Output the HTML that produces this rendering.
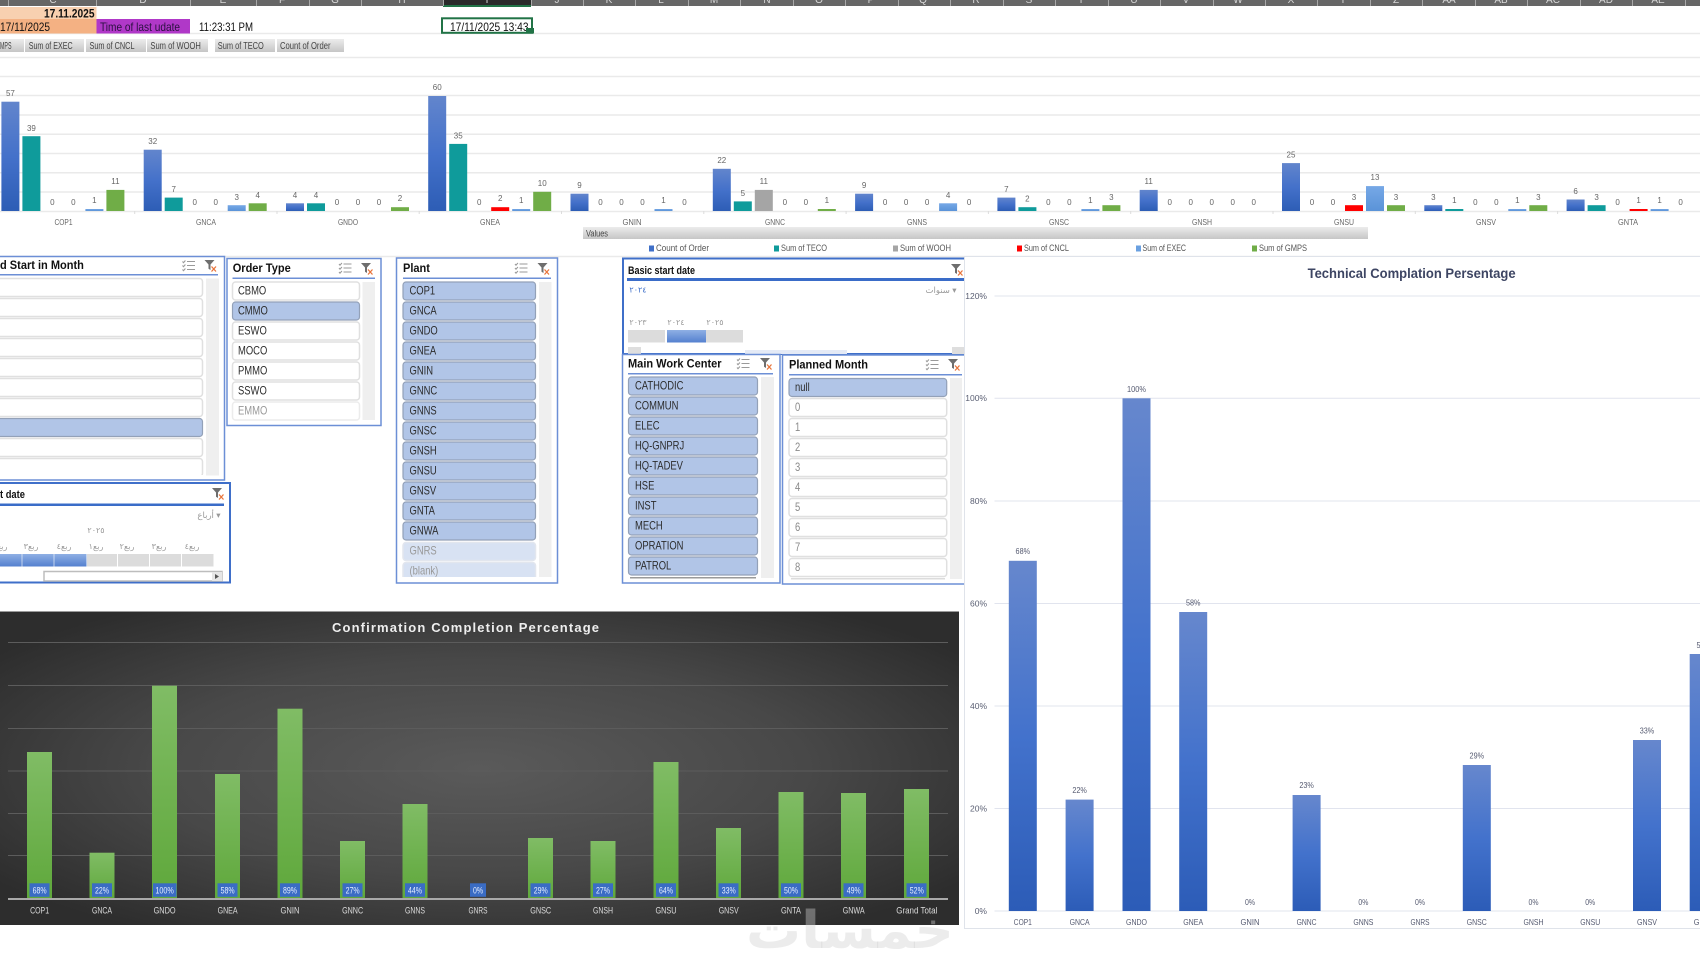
<!DOCTYPE html>
<html lang="en"><head><meta charset="utf-8"><title>Dashboard</title>
<style>
html,body{margin:0;padding:0;background:#fff;width:1700px;height:970px;overflow:hidden}
svg{display:block;filter:blur(.3px)}
text{font-family:"Liberation Sans","DejaVu Sans",sans-serif}
.rl{stroke:#eaeaea;stroke-width:1.5}
.hd{font-size:10px;fill:#d8d8d8;text-anchor:middle}
.hs{fill:#a8a8a8;width:1px;height:6px;y:0}
.cell{font-size:12px;fill:#111}
.btn{font-size:10px;fill:#444}
.v{font-size:8px;fill:#666;text-anchor:middle}
.cat{font-size:8.5px;fill:#666;text-anchor:middle}
.lg{font-size:9px;fill:#555}
.c1{fill:url(#gB);width:18px}.c2{fill:#0f9b9b;width:18px}.c3{fill:#a5a5a5;width:18px}.c4{fill:#f00;width:18px}.c5{fill:url(#gL);width:18px}.c6{fill:#70ad47;width:18px}
.sl{fill:#fff;stroke:#6c8fd6;stroke-width:1.5}
.sd{fill:#fff;stroke:#3f6fc9;stroke-width:2}
.ul{fill:#6c8fd6}
.ud{fill:#3a6cc8}
.sb{fill:#efefef}
.ttl{font-size:12px;font-weight:bold;fill:#111}
.it{font-size:11.5px;fill:#2c2c2c}
.it2{font-size:11.5px;fill:#999}
.w{fill:#fff;stroke:#e0e0e0;stroke-width:1.5}
.b{fill:#b1c5e7;stroke:#93a1b8;stroke-width:1.2}
.l{fill:#d8e2f3;stroke:#e2e6ee;stroke-width:1.5}
.f{fill:#fff;stroke:#ececec;stroke-width:1.5}
.s1{width:207.5px;height:18px;rx:3px}
.s2{width:127px;height:18px;rx:3px}
.s3{width:132.5px;height:18px;rx:3px}
.s4{width:129px;height:18px;rx:3px}
.s5{width:157.7px;height:18px;rx:3px}
.ar{font-size:8px;fill:#999;text-anchor:middle}
.g{fill:#dcdcdc}
.tg{stroke:#e1e4ee;stroke-width:1}
.ty{font-size:8.5px;fill:#5a5f73;text-anchor:end}
.tl{font-size:8.5px;fill:#555a70;text-anchor:middle}
.tb{fill:url(#gT);width:28px}
.dg{stroke:#5c5c5c;stroke-width:1}
.db{fill:url(#gG);width:25px}
.dbx{fill:#3a6cc4;height:13.5px}
.dt{font-size:9px;fill:#e6eeff;text-anchor:middle}
.dc{font-size:9px;fill:#ddd;text-anchor:middle}
</style></head><body>
<svg width="1700" height="970" viewBox="0 0 1700 970" xmlns="http://www.w3.org/2000/svg">
<defs>
<linearGradient id="gB" x1="0" y1="0" x2="0" y2="1"><stop offset="0" stop-color="#6285cc"/><stop offset=".5" stop-color="#4471ca"/><stop offset="1" stop-color="#2d5db5"/></linearGradient>
<linearGradient id="gL" x1="0" y1="0" x2="0" y2="1"><stop offset="0" stop-color="#76a8e6"/><stop offset="1" stop-color="#5a93d8"/></linearGradient>
<linearGradient id="gT" x1="0" y1="0" x2="0" y2="1"><stop offset="0" stop-color="#6687cd"/><stop offset=".5" stop-color="#4372cc"/><stop offset="1" stop-color="#2c5cb7"/></linearGradient>
<linearGradient id="gG" x1="0" y1="0" x2="0" y2="1"><stop offset="0" stop-color="#80bc65"/><stop offset="1" stop-color="#5fa83b"/></linearGradient>
<linearGradient id="gBtn" x1="0" y1="0" x2="0" y2="1"><stop offset="0" stop-color="#ececec"/><stop offset="1" stop-color="#c6c6c6"/></linearGradient>
<linearGradient id="gSel" x1="0" y1="0" x2="0" y2="1"><stop offset="0" stop-color="#8fb0e4"/><stop offset="1" stop-color="#5480cf"/></linearGradient>
<radialGradient id="gD" cx="50%" cy="50%" r="62%"><stop offset="0" stop-color="#5a5a5a"/><stop offset=".55" stop-color="#484848"/><stop offset="1" stop-color="#2d2d2d"/></radialGradient>
<g id="ic1" fill="none" stroke="#9a9a9a" stroke-width="1.1"><path d="M5 1.5H13M5 5.5H13M5 9.5H13"/><path d="M0.5 1.5L1.5 2.7L3.4 0.5M0.5 5.5L1.5 6.7L3.4 4.5M0.5 9.5L1.5 10.7L3.4 8.5"/></g>
<g id="ic2"><path d="M0 0H10L6 4.5V10L4 8.8V4.5Z" fill="#6e6e6e"/><path d="M7 6.5L11.5 11.5M11.5 6.5L7 11.5" stroke="#e8743b" stroke-width="1.3" fill="none"/></g>
</defs>

<rect width="1700" height="970" fill="#fff"/>
<!-- row lines -->
<g class="rl"><line x1="0" x2="1700" y1="33.5" y2="33.5"/><line x1="0" x2="1700" y1="57.5" y2="57.5"/><line x1="0" x2="1700" y1="76.5" y2="76.5"/><line x1="0" x2="1700" y1="95.5" y2="95.5"/><line x1="0" x2="1700" y1="115" y2="115"/><line x1="0" x2="1700" y1="134.3" y2="134.3"/><line x1="0" x2="1700" y1="153.5" y2="153.5"/><line x1="0" x2="1700" y1="172.7" y2="172.7"/><line x1="0" x2="1700" y1="192" y2="192"/><line x1="0" x2="1700" y1="211.5" y2="211.5"/><line x1="0" x2="1700" y1="256.5" y2="256.5"/></g>

<!-- column headers -->
<rect width="1700" height="6" fill="#666"/>
<rect x="443" width="88" height="5" fill="#2a2a2a"/><rect x="443" y="5" width="88" height="2" fill="#217346"/>
<g>
<rect class="hs" x="8"/><rect class="hs" x="96"/><rect class="hs" x="190"/><rect class="hs" x="256"/><rect class="hs" x="309"/><rect class="hs" x="361"/><rect class="hs" x="443"/><rect class="hs" x="531"/><rect class="hs" x="583"/><rect class="hs" x="635"/><rect class="hs" x="688"/><rect class="hs" x="740"/><rect class="hs" x="793"/><rect class="hs" x="845"/><rect class="hs" x="898"/><rect class="hs" x="950"/><rect class="hs" x="1003"/><rect class="hs" x="1055"/><rect class="hs" x="1108"/><rect class="hs" x="1160"/><rect class="hs" x="1213"/><rect class="hs" x="1265"/><rect class="hs" x="1317"/><rect class="hs" x="1370"/><rect class="hs" x="1422"/><rect class="hs" x="1475"/><rect class="hs" x="1527"/><rect class="hs" x="1580"/><rect class="hs" x="1632"/><rect class="hs" x="1685"/>
</g>
<g class="hd"><text x="53" y="3">C</text><text x="143" y="3">D</text><text x="223" y="3">E</text><text x="282" y="3">F</text><text x="335" y="3">G</text><text x="402" y="3">H</text><text x="487" y="3">I</text><text x="557" y="3">J</text><text x="609" y="3">K</text><text x="661" y="3">L</text><text x="714" y="3">M</text><text x="767" y="3">N</text><text x="819" y="3">O</text><text x="871" y="3">P</text><text x="923" y="3">Q</text><text x="976" y="3">R</text><text x="1029" y="3">S</text><text x="1081" y="3">T</text><text x="1134" y="3">U</text><text x="1186" y="3">V</text><text x="1238" y="3">W</text><text x="1291" y="3">X</text><text x="1343" y="3">Y</text><text x="1396" y="3">Z</text><text x="1449" y="3">AA</text><text x="1501" y="3">AB</text><text x="1553" y="3">AC</text><text x="1606" y="3">AD</text><text x="1658" y="3">AE</text></g>

<!-- top cells -->
<rect x="0" y="7" width="96.5" height="12" fill="#f8d0b0"/>
<rect x="0" y="19" width="96.5" height="14.5" fill="#f4b183"/>
<rect x="96.5" y="19" width="93.5" height="14.5" fill="#b038c8"/>
<text class="cell" x="44" y="17.5" font-weight="bold" textLength="50.5" lengthAdjust="spacingAndGlyphs">17.11.2025</text>
<text class="cell" x="0" y="31" textLength="50" lengthAdjust="spacingAndGlyphs">17/11/2025</text>
<text class="cell" x="100" y="31" textLength="80" lengthAdjust="spacingAndGlyphs" style="fill:#2a1040">Time of last udate</text>
<text class="cell" x="199" y="31" textLength="54" lengthAdjust="spacingAndGlyphs">11:23:31 PM</text>
<rect x="442" y="18.3" width="90" height="14.5" fill="#fff" stroke="#217346" stroke-width="2"/>
<text class="cell" x="450" y="31" textLength="78.5" lengthAdjust="spacingAndGlyphs">17/11/2025 13:43</text>
<rect x="526" y="28" width="8" height="5.5" fill="#217346"/>

<!-- pivot buttons -->
<g fill="url(#gBtn)"><rect x="-2" y="39" width="26" height="13"/><rect x="25" y="39" width="59" height="13"/><rect x="86" y="39" width="60" height="13"/><rect x="147" y="39" width="61" height="13"/><rect x="215" y="39" width="60" height="13"/><rect x="277" y="39" width="67" height="13"/></g>
<text class="btn" x="0" y="49" textLength="11.5" lengthAdjust="spacingAndGlyphs">MPS</text>
<text class="btn" x="28.7" y="49" textLength="44" lengthAdjust="spacingAndGlyphs">Sum of EXEC</text>
<text class="btn" x="89.5" y="49" textLength="45" lengthAdjust="spacingAndGlyphs">Sum of CNCL</text>
<text class="btn" x="150.4" y="49" textLength="50.5" lengthAdjust="spacingAndGlyphs">Sum of WOOH</text>
<text class="btn" x="217.8" y="49" textLength="46" lengthAdjust="spacingAndGlyphs">Sum of TECO</text>
<text class="btn" x="280" y="49" textLength="50.5" lengthAdjust="spacingAndGlyphs">Count of Order</text>

<!-- bars chart -->
<g transform="translate(-7.6 0)">
<rect class="c1" x="9" y="101.7" height="109.3"/><rect class="c2" x="30" y="136.2" height="74.8"/><rect class="c5" x="93" y="209" height="2"/><rect class="c6" x="114" y="189.9" height="21.1"/>
<g class="v"><text x="18" y="96">57</text><text x="39" y="131">39</text><text x="60" y="205">0</text><text x="81" y="205">0</text><text x="102" y="203">1</text><text x="123" y="184">11</text></g></g>
<g transform="translate(134.7 0)">
<rect class="c1" x="9" y="149.7" height="61.3"/><rect class="c2" x="30" y="197.6" height="13.4"/><rect class="c5" x="93" y="205.2" height="5.8"/><rect class="c6" x="114" y="203.3" height="7.7"/>
<g class="v"><text x="18" y="144">32</text><text x="39" y="192">7</text><text x="60" y="205">0</text><text x="81" y="205">0</text><text x="102" y="200">3</text><text x="123" y="198">4</text></g></g>
<g transform="translate(277 0)">
<rect class="c1" x="9" y="203.3" height="7.7"/><rect class="c2" x="30" y="203.3" height="7.7"/><rect class="c6" x="114" y="207.2" height="3.8"/>
<g class="v"><text x="18" y="198">4</text><text x="39" y="198">4</text><text x="60" y="205">0</text><text x="81" y="205">0</text><text x="102" y="205">0</text><text x="123" y="201">2</text></g></g>
<g transform="translate(419.2 0)">
<rect class="c1" x="9" y="96" height="115"/><rect class="c2" x="30" y="143.9" height="67.1"/><rect class="c4" x="72" y="207.2" height="3.8"/><rect class="c5" x="93" y="209" height="2"/><rect class="c6" x="114" y="191.8" height="19.2"/>
<g class="v"><text x="18" y="90">60</text><text x="39" y="138.5">35</text><text x="60" y="205">0</text><text x="81" y="201">2</text><text x="102" y="203">1</text><text x="123" y="186">10</text></g></g>
<g transform="translate(561.5 0)">
<rect class="c1" x="9" y="193.7" height="17.3"/><rect class="c5" x="93" y="209" height="2"/>
<g class="v"><text x="18" y="188">9</text><text x="39" y="205">0</text><text x="60" y="205">0</text><text x="81" y="205">0</text><text x="102" y="203">1</text><text x="123" y="205">0</text></g></g>
<g transform="translate(703.8 0)">
<rect class="c1" x="9" y="168.8" height="42.2"/><rect class="c2" x="30" y="201.4" height="9.6"/><rect class="c3" x="51" y="189.9" height="21.1"/><rect class="c6" x="114" y="209" height="2"/>
<g class="v"><text x="18" y="163">22</text><text x="39" y="196">5</text><text x="60" y="184">11</text><text x="81" y="205">0</text><text x="102" y="205">0</text><text x="123" y="203">1</text></g></g>
<g transform="translate(846.1 0)">
<rect class="c1" x="9" y="193.7" height="17.3"/><rect class="c5" x="93" y="203.3" height="7.7"/>
<g class="v"><text x="18" y="188">9</text><text x="39" y="205">0</text><text x="60" y="205">0</text><text x="81" y="205">0</text><text x="102" y="198">4</text><text x="123" y="205">0</text></g></g>
<g transform="translate(988.4 0)">
<rect class="c1" x="9" y="197.6" height="13.4"/><rect class="c2" x="30" y="207.2" height="3.8"/><rect class="c5" x="93" y="209" height="2"/><rect class="c6" x="114" y="205.2" height="5.8"/>
<g class="v"><text x="18" y="192">7</text><text x="39" y="201.5">2</text><text x="60" y="205">0</text><text x="81" y="205">0</text><text x="102" y="203">1</text><text x="123" y="200">3</text></g></g>
<g transform="translate(1130.7 0)">
<rect class="c1" x="9" y="189.9" height="21.1"/>
<g class="v"><text x="18" y="184">11</text><text x="39" y="205">0</text><text x="60" y="205">0</text><text x="81" y="205">0</text><text x="102" y="205">0</text><text x="123" y="205">0</text></g></g>
<g transform="translate(1273 0)">
<rect class="c1" x="9" y="163.1" height="47.9"/><rect class="c4" x="72" y="205.2" height="5.8"/><rect class="c5" x="93" y="186.1" height="24.9"/><rect class="c6" x="114" y="205.2" height="5.8"/>
<g class="v"><text x="18" y="157.5">25</text><text x="39" y="205">0</text><text x="60" y="205">0</text><text x="81" y="200">3</text><text x="102" y="180">13</text><text x="123" y="200">3</text></g></g>
<g transform="translate(1415.3 0)">
<rect class="c1" x="9" y="205.2" height="5.8"/><rect class="c2" x="30" y="209" height="2"/><rect class="c5" x="93" y="209" height="2"/><rect class="c6" x="114" y="205.2" height="5.8"/>
<g class="v"><text x="18" y="200">3</text><text x="39" y="203">1</text><text x="60" y="205">0</text><text x="81" y="205">0</text><text x="102" y="203">1</text><text x="123" y="200">3</text></g></g>
<g transform="translate(1557.6 0)">
<rect class="c1" x="9" y="199.5" height="11.5"/><rect class="c2" x="30" y="205.2" height="5.8"/><rect class="c4" x="72" y="209" height="2"/><rect class="c5" x="93" y="209" height="2"/>
<g class="v"><text x="18" y="194">6</text><text x="39" y="200">3</text><text x="60" y="205">0</text><text x="81" y="203">1</text><text x="102" y="203">1</text><text x="123" y="205">0</text></g></g>
<g stroke="#dcdcdc"><line x1="134.7" x2="134.7" y1="211" y2="214"/><line x1="277" x2="277" y1="211" y2="214"/><line x1="419.2" x2="419.2" y1="211" y2="214"/><line x1="561.5" x2="561.5" y1="211" y2="214"/><line x1="703.8" x2="703.8" y1="211" y2="214"/><line x1="846.1" x2="846.1" y1="211" y2="214"/><line x1="988.4" x2="988.4" y1="211" y2="214"/><line x1="1130.7" x2="1130.7" y1="211" y2="214"/><line x1="1273" x2="1273" y1="211" y2="214"/><line x1="1415.3" x2="1415.3" y1="211" y2="214"/><line x1="1557.6" x2="1557.6" y1="211" y2="214"/></g>
<g class="cat"><text x="63.5" y="225" textLength="18" lengthAdjust="spacingAndGlyphs">COP1</text><text x="206" y="225" textLength="20" lengthAdjust="spacingAndGlyphs">GNCA</text><text x="348" y="225" textLength="20" lengthAdjust="spacingAndGlyphs">GNDO</text><text x="490" y="225" textLength="20" lengthAdjust="spacingAndGlyphs">GNEA</text><text x="632" y="225" textLength="19" lengthAdjust="spacingAndGlyphs">GNIN</text><text x="775" y="225" textLength="20" lengthAdjust="spacingAndGlyphs">GNNC</text><text x="917" y="225" textLength="20" lengthAdjust="spacingAndGlyphs">GNNS</text><text x="1059" y="225" textLength="20" lengthAdjust="spacingAndGlyphs">GNSC</text><text x="1202" y="225" textLength="20" lengthAdjust="spacingAndGlyphs">GNSH</text><text x="1344" y="225" textLength="20" lengthAdjust="spacingAndGlyphs">GNSU</text><text x="1486" y="225" textLength="20" lengthAdjust="spacingAndGlyphs">GNSV</text><text x="1628" y="225" textLength="20" lengthAdjust="spacingAndGlyphs">GNTA</text></g>

<rect x="583" y="227" width="785" height="12" fill="url(#gBtn)"/>
<text class="btn" x="586" y="236.5" textLength="22" lengthAdjust="spacingAndGlyphs" style="font-size:9px">Values</text>

<!-- legend -->
<rect x="649" y="245.5" width="5" height="6" fill="#3f6fc8"/><text class="lg" x="656" y="251" textLength="53" lengthAdjust="spacingAndGlyphs">Count of Order</text>
<rect x="774" y="245.5" width="5" height="6" fill="#0f9b9b"/><text class="lg" x="781" y="251" textLength="46" lengthAdjust="spacingAndGlyphs">Sum of TECO</text>
<rect x="893" y="245.5" width="5" height="6" fill="#a5a5a5"/><text class="lg" x="900" y="251" textLength="51" lengthAdjust="spacingAndGlyphs">Sum of WOOH</text>
<rect x="1017" y="245.5" width="5" height="6" fill="#f00"/><text class="lg" x="1024" y="251" textLength="45" lengthAdjust="spacingAndGlyphs">Sum of CNCL</text>
<rect x="1136" y="245.5" width="5" height="6" fill="#6aa0e0"/><text class="lg" x="1142.5" y="251" textLength="43.5" lengthAdjust="spacingAndGlyphs">Sum of EXEC</text>
<rect x="1252" y="245.5" width="5" height="6" fill="#70ad47"/><text class="lg" x="1259" y="251" textLength="48" lengthAdjust="spacingAndGlyphs">Sum of GMPS</text>

<!-- Slicer 1 -->
<rect class="sl" x="-3" y="256.5" width="227.5" height="223.5"/>
<text class="ttl" y="269" transform="translate(0 0) scale(.92 1)">d Start in Month</text>
<rect class="ul" x="0" y="274" width="218" height="1.5"/>
<use href="#ic1" x="182" y="260"/><use href="#ic2" x="204.5" y="260"/>
<rect class="sb" x="206" y="278.5" width="13" height="197"/>
<g><rect class="s1 w" x="-5" y="278.5"/><rect class="s1 w" x="-5" y="298.5"/><rect class="s1 w" x="-5" y="318.5"/><rect class="s1 w" x="-5" y="338.5"/><rect class="s1 w" x="-5" y="358.5"/><rect class="s1 w" x="-5" y="378.5"/><rect class="s1 w" x="-5" y="398.5"/><rect class="s1 b" x="-5" y="418.5"/><rect class="s1 w" x="-5" y="438.5"/><rect class="s1 w" x="-5" y="458.5"/></g>
<rect x="-2" y="475" width="207" height="4" fill="#fff"/>

<!-- Order Type -->
<rect class="sl" x="227" y="258.5" width="154" height="167"/>
<text class="ttl" transform="translate(232.7 272) scale(.92 1)">Order Type</text>
<rect class="ul" x="232.5" y="277.5" width="142.5" height="1.5"/>
<use href="#ic1" x="338.5" y="262.5"/><use href="#ic2" x="361" y="263"/>
<rect class="sb" x="362.5" y="282" width="12.5" height="138"/>
<rect class="s2 w" x="232.5" y="282"/><rect class="s2 b" x="232.5" y="302"/><rect class="s2 w" x="232.5" y="322"/><rect class="s2 w" x="232.5" y="342"/><rect class="s2 w" x="232.5" y="362"/><rect class="s2 w" x="232.5" y="382"/><rect class="s2 f" x="232.5" y="402"/>
<g transform="translate(238 0) scale(.82 1)"><g class="it"><text y="294.5">CBMO</text><text y="314.5">CMMO</text><text y="334.5">ESWO</text><text y="354.5">MOCO</text><text y="374.5">PMMO</text><text y="394.5">SSWO</text></g><text class="it2" y="414.5">EMMO</text></g>

<!-- Plant -->
<rect class="sl" x="396.5" y="258" width="161" height="325"/>
<text class="ttl" transform="translate(403 272) scale(.92 1)">Plant</text>
<rect class="ul" x="403" y="277.5" width="148" height="1.5"/>
<use href="#ic1" x="514.5" y="262.5"/><use href="#ic2" x="537.5" y="263"/>
<rect class="sb" x="539" y="282" width="12.5" height="295"/>
<rect class="s3 b" x="403" y="282"/><rect class="s3 b" x="403" y="302"/><rect class="s3 b" x="403" y="322"/><rect class="s3 b" x="403" y="342"/><rect class="s3 b" x="403" y="362"/><rect class="s3 b" x="403" y="382"/><rect class="s3 b" x="403" y="402"/><rect class="s3 b" x="403" y="422"/><rect class="s3 b" x="403" y="442"/><rect class="s3 b" x="403" y="462"/><rect class="s3 b" x="403" y="482"/><rect class="s3 b" x="403" y="502"/><rect class="s3 b" x="403" y="522"/><rect class="s3 l" x="403" y="542.5"/><rect class="s3 l" x="403" y="562.5"/>
<rect x="401" y="577" width="137" height="5" fill="#fff"/>
<g transform="translate(409.5 0) scale(.82 1)"><g class="it"><text y="294.5">COP1</text><text y="314.5">GNCA</text><text y="334.5">GNDO</text><text y="354.5">GNEA</text><text y="374.5">GNIN</text><text y="394.5">GNNC</text><text y="414.5">GNNS</text><text y="434.5">GNSC</text><text y="454.5">GNSH</text><text y="474.5">GNSU</text><text y="494.5">GNSV</text><text y="514.5">GNTA</text><text y="534.5">GNWA</text></g><text class="it2" y="554.5">GNRS</text><text class="it2" y="574.5">(blank)</text></g>

<!-- Date slicer bottom left -->
<rect class="sd" x="-3" y="483" width="233" height="99.5"/>
<text class="ttl" transform="translate(0 498) scale(.85 1)" style="font-size:11px">t date</text>
<rect class="ud" x="0" y="503.5" width="224" height="2.5"/>
<use href="#ic2" x="212" y="488"/>
<text class="ar" x="209" y="518" style="font-size:8.5px">أرباع ▾</text>
<text class="ar" x="96" y="533">٢٠٢٥</text>
<g class="ar"><text x="0" y="549">ربع٢</text><text x="31" y="549">ربع٣</text><text x="64" y="549">ربع٤</text><text x="96" y="549">ربع١</text><text x="127" y="549">ربع٢</text><text x="159" y="549">ربع٣</text><text x="192" y="549">ربع٤</text></g>
<rect x="0" y="554" width="86.5" height="12.5" fill="url(#gSel)"/><rect x="21.5" y="554" width="1" height="12.5" fill="#fff" opacity=".6"/><rect x="53.5" y="554" width="1" height="12.5" fill="#fff" opacity=".6"/>
<rect class="g" x="87" y="554" width="30" height="12.5"/><rect class="g" x="118" y="554" width="31" height="12.5"/><rect class="g" x="150" y="554" width="31" height="12.5"/><rect class="g" x="182" y="554" width="31.5" height="12.5"/>
<rect x="44" y="571.5" width="178" height="9.5" fill="#fff" stroke="#bdbdbd" stroke-width="1.5"/>
<rect x="212" y="572" width="10" height="9" fill="#e6e6e6"/><path d="M215 574L219 576.5L215 579Z" fill="#555"/>

<!-- Basic start date -->
<rect class="sd" x="623" y="258.5" width="350" height="95.5"/>
<text class="ttl" x="628" y="274" textLength="67" lengthAdjust="spacingAndGlyphs" style="font-size:11px">Basic start date</text>
<rect class="ud" x="627" y="278" width="340" height="3"/>
<use href="#ic2" x="951" y="264"/>
<text x="638" y="292.5" style="font-size:8px;fill:#3a6cc8;text-anchor:middle">٢٠٢٤</text>
<text class="ar" x="941" y="293" style="font-size:8.5px">سنوات ▾</text>
<g class="ar"><text x="638" y="325">٢٠٢٣</text><text x="676" y="325">٢٠٢٤</text><text x="715" y="325">٢٠٢٥</text></g>
<rect class="g" x="628" y="330" width="37" height="12.5"/><rect x="667" y="330" width="39" height="12.5" fill="url(#gSel)"/><rect class="g" x="706" y="330" width="37" height="12.5"/>
<rect x="628" y="347" width="13" height="7" fill="#dedede"/><rect x="952" y="347" width="12" height="7" fill="#dedede"/><rect x="745" y="350" width="102" height="4" fill="#e4eaf6"/>

<!-- Main Work Center -->
<rect class="sl" x="622.5" y="354.5" width="157.5" height="228.5"/>
<text class="ttl" transform="translate(628 367.5) scale(.92 1)">Main Work Center</text>
<rect class="ul" x="628" y="373" width="145" height="1.5"/>
<use href="#ic1" x="736.5" y="358"/><use href="#ic2" x="760" y="358"/>
<rect class="sb" x="761" y="377" width="13" height="201"/>
<rect class="s4 b" x="628.5" y="377"/><rect class="s4 b" x="628.5" y="397"/><rect class="s4 b" x="628.5" y="417"/><rect class="s4 b" x="628.5" y="437"/><rect class="s4 b" x="628.5" y="457"/><rect class="s4 b" x="628.5" y="477"/><rect class="s4 b" x="628.5" y="497"/><rect class="s4 b" x="628.5" y="517"/><rect class="s4 b" x="628.5" y="537"/><rect class="s4 b" x="628.5" y="557"/>
<rect x="630" y="577" width="126" height="1.5" fill="#9a9a9a"/>
<g class="it" transform="translate(635 0) scale(.82 1)"><text y="389.5">CATHODIC</text><text y="409.5">COMMUN</text><text y="429.5">ELEC</text><text y="449.5">HQ-GNPRJ</text><text y="469.5">HQ-TADEV</text><text y="489.5">HSE</text><text y="509.5">INST</text><text y="529.5">MECH</text><text y="549.5">OPRATION</text><text y="569.5">PATROL</text></g>

<!-- Planned Month -->
<rect class="sl" x="782.5" y="355" width="190" height="229"/>
<text class="ttl" transform="translate(789 368.5) scale(.92 1)">Planned Month</text>
<rect class="ul" x="789" y="374" width="173" height="1.5"/>
<use href="#ic1" x="925.5" y="359"/><use href="#ic2" x="948" y="359"/>
<rect class="sb" x="950" y="378" width="12" height="201"/>
<rect class="s5 b" x="789" y="378.5"/><rect class="s5 w" x="789" y="398.5"/><rect class="s5 w" x="789" y="418.5"/><rect class="s5 w" x="789" y="438.5"/><rect class="s5 w" x="789" y="458.5"/><rect class="s5 w" x="789" y="478.5"/><rect class="s5 w" x="789" y="498.5"/><rect class="s5 w" x="789" y="518.5"/><rect class="s5 w" x="789" y="538.5"/><rect class="s5 w" x="789" y="558.5"/>
<rect x="791" y="578" width="154" height="1.5" fill="#dcdcdc"/>
<g transform="translate(795 0) scale(.82 1)"><text class="it" y="391">null</text><g class="it" style="fill:#8a8a8a"><text y="411">0</text><text y="431">1</text><text y="451">2</text><text y="471">3</text><text y="491">4</text><text y="511">5</text><text y="531">6</text><text y="551">7</text><text y="571">8</text></g></g>

<!-- Dark chart -->
<rect x="0" y="611" width="959" height="314" fill="url(#gD)"/>
<rect x="0" y="611" width="959" height="1" fill="#9a9a9a"/>
<text x="465.5" y="632" textLength="267" style="font-size:13px;font-weight:bold;fill:#eee;text-anchor:middle">Confirmation Completion Percentage</text>
<g class="dg"><line x1="8" x2="948" y1="642.5" y2="642.5"/><line x1="8" x2="948" y1="685.5" y2="685.5"/><line x1="8" x2="948" y1="728.5" y2="728.5"/><line x1="8" x2="948" y1="771" y2="771"/><line x1="8" x2="948" y1="813.5" y2="813.5"/><line x1="8" x2="948" y1="855.5" y2="855.5"/></g>
<rect class="db" x="27" y="752" height="147"/><rect class="db" x="89.5" y="852.7" height="46.3"/><rect class="db" x="152" y="685.7" height="213.3"/><rect class="db" x="215" y="774" height="125"/><rect class="db" x="277.5" y="708.7" height="190.3"/><rect class="db" x="340" y="841" height="58"/><rect class="db" x="402.5" y="804" height="95"/><rect class="db" x="528" y="838" height="61"/><rect class="db" x="590.5" y="841" height="58"/><rect class="db" x="653.5" y="762" height="137"/><rect class="db" x="716" y="828" height="71"/><rect class="db" x="778.5" y="792" height="107"/><rect class="db" x="841" y="793" height="106"/><rect class="db" x="904" y="789" height="110"/>
<rect x="8" y="898" width="940" height="2" fill="#a9a9a9"/>
<rect class="dbx" x="29.5" y="883.3" width="20"/><rect class="dbx" x="92" y="883.3" width="20"/><rect class="dbx" x="153" y="883.3" width="23.5"/><rect class="dbx" x="217.5" y="883.3" width="20"/><rect class="dbx" x="280" y="883.3" width="20"/><rect class="dbx" x="342.5" y="883.3" width="20"/><rect class="dbx" x="405" y="883.3" width="20"/><rect class="dbx" x="470" y="883.3" width="16"/><rect class="dbx" x="530.5" y="883.3" width="20"/><rect class="dbx" x="593" y="883.3" width="20"/><rect class="dbx" x="656" y="883.3" width="20"/><rect class="dbx" x="718.5" y="883.3" width="20"/><rect class="dbx" x="781" y="883.3" width="20"/><rect class="dbx" x="843.5" y="883.3" width="20"/><rect class="dbx" x="906.5" y="883.3" width="20"/>
<g class="dt"><text x="39.6" y="893.5" textLength="14" lengthAdjust="spacingAndGlyphs">68%</text><text x="102" y="893.5" textLength="14" lengthAdjust="spacingAndGlyphs">22%</text><text x="164.6" y="893.5" textLength="18.5" lengthAdjust="spacingAndGlyphs">100%</text><text x="227.6" y="893.5" textLength="14" lengthAdjust="spacingAndGlyphs">58%</text><text x="290" y="893.5" textLength="14" lengthAdjust="spacingAndGlyphs">89%</text><text x="352.6" y="893.5" textLength="14" lengthAdjust="spacingAndGlyphs">27%</text><text x="415" y="893.5" textLength="14" lengthAdjust="spacingAndGlyphs">44%</text><text x="478" y="893.5" textLength="10" lengthAdjust="spacingAndGlyphs">0%</text><text x="540.7" y="893.5" textLength="14" lengthAdjust="spacingAndGlyphs">29%</text><text x="603" y="893.5" textLength="14" lengthAdjust="spacingAndGlyphs">27%</text><text x="666" y="893.5" textLength="14" lengthAdjust="spacingAndGlyphs">64%</text><text x="728.7" y="893.5" textLength="14" lengthAdjust="spacingAndGlyphs">33%</text><text x="791" y="893.5" textLength="14" lengthAdjust="spacingAndGlyphs">50%</text><text x="853.7" y="893.5" textLength="14" lengthAdjust="spacingAndGlyphs">49%</text><text x="916.8" y="893.5" textLength="14" lengthAdjust="spacingAndGlyphs">52%</text></g>
<g class="dc"><text x="39.6" y="913.5" textLength="19" lengthAdjust="spacingAndGlyphs">COP1</text><text x="102" y="913.5" textLength="20" lengthAdjust="spacingAndGlyphs">GNCA</text><text x="164.6" y="913.5" textLength="22" lengthAdjust="spacingAndGlyphs">GNDO</text><text x="227.6" y="913.5" textLength="20" lengthAdjust="spacingAndGlyphs">GNEA</text><text x="290" y="913.5" textLength="19" lengthAdjust="spacingAndGlyphs">GNIN</text><text x="352.6" y="913.5" textLength="21" lengthAdjust="spacingAndGlyphs">GNNC</text><text x="415" y="913.5" textLength="20" lengthAdjust="spacingAndGlyphs">GNNS</text><text x="478" y="913.5" textLength="19" lengthAdjust="spacingAndGlyphs">GNRS</text><text x="540.7" y="913.5" textLength="21" lengthAdjust="spacingAndGlyphs">GNSC</text><text x="603" y="913.5" textLength="20" lengthAdjust="spacingAndGlyphs">GNSH</text><text x="666" y="913.5" textLength="21" lengthAdjust="spacingAndGlyphs">GNSU</text><text x="728.7" y="913.5" textLength="20" lengthAdjust="spacingAndGlyphs">GNSV</text><text x="791" y="913.5" textLength="20" lengthAdjust="spacingAndGlyphs">GNTA</text><text x="853.7" y="913.5" textLength="22" lengthAdjust="spacingAndGlyphs">GNWA</text><text x="916.8" y="913.5" textLength="41" lengthAdjust="spacingAndGlyphs">Grand Total</text></g>

<!-- Technical chart -->
<rect x="964.5" y="256.5" width="740" height="672" fill="#fff" stroke="#dfe3ea"/>
<text x="1411.6" y="278" textLength="208" lengthAdjust="spacingAndGlyphs" style="font-size:13.5px;font-weight:bold;fill:#3d4563;text-anchor:middle">Technical Complation Persentage</text>
<g class="tg"><line x1="994.5" x2="1700" y1="296" y2="296"/><line x1="994.5" x2="1700" y1="398.3" y2="398.3"/><line x1="994.5" x2="1700" y1="501" y2="501"/><line x1="994.5" x2="1700" y1="603.5" y2="603.5"/><line x1="994.5" x2="1700" y1="706" y2="706"/><line x1="994.5" x2="1700" y1="808.5" y2="808.5"/><line x1="994.5" x2="1700" y1="911" y2="911"/></g>
<g class="ty"><text x="987" y="299">120%</text><text x="987" y="401">100%</text><text x="987" y="504">80%</text><text x="987" y="606.5">60%</text><text x="987" y="709">40%</text><text x="987" y="811.5">20%</text><text x="987" y="914">0%</text></g>
<rect class="tb" x="1008.8" y="560.8" height="350.2"/><rect class="tb" x="1065.6" y="799.6" height="111.4"/><rect class="tb" x="1122.5" y="398.3" height="512.7"/><rect class="tb" x="1179.2" y="612" height="299"/><rect class="tb" x="1292.6" y="795" height="116"/><rect class="tb" x="1462.8" y="765" height="146"/><rect class="tb" x="1633" y="740" height="171"/><rect class="tb" x="1689.7" y="654" height="257"/>
<g class="tl"><text x="1022.8" y="554" textLength="14.5" lengthAdjust="spacingAndGlyphs">68%</text><text x="1079.6" y="793" textLength="14.5" lengthAdjust="spacingAndGlyphs">22%</text><text x="1136.5" y="392" textLength="19" lengthAdjust="spacingAndGlyphs">100%</text><text x="1193.2" y="605.5" textLength="14.5" lengthAdjust="spacingAndGlyphs">58%</text><text x="1250" y="905" textLength="10" lengthAdjust="spacingAndGlyphs">0%</text><text x="1306.6" y="788" textLength="14.5" lengthAdjust="spacingAndGlyphs">23%</text><text x="1363.4" y="905" textLength="10" lengthAdjust="spacingAndGlyphs">0%</text><text x="1420" y="905" textLength="10" lengthAdjust="spacingAndGlyphs">0%</text><text x="1476.8" y="758.5" textLength="14.5" lengthAdjust="spacingAndGlyphs">29%</text><text x="1533.5" y="905" textLength="10" lengthAdjust="spacingAndGlyphs">0%</text><text x="1590.2" y="905" textLength="10" lengthAdjust="spacingAndGlyphs">0%</text><text x="1647" y="733.5" textLength="14.5" lengthAdjust="spacingAndGlyphs">33%</text><text x="1703.7" y="648" textLength="14.5" lengthAdjust="spacingAndGlyphs">50%</text></g>
<g class="tl"><text x="1022.8" y="925" textLength="18" lengthAdjust="spacingAndGlyphs">COP1</text><text x="1079.6" y="925" textLength="20" lengthAdjust="spacingAndGlyphs">GNCA</text><text x="1136.5" y="925" textLength="21" lengthAdjust="spacingAndGlyphs">GNDO</text><text x="1193.2" y="925" textLength="20" lengthAdjust="spacingAndGlyphs">GNEA</text><text x="1250" y="925" textLength="19" lengthAdjust="spacingAndGlyphs">GNIN</text><text x="1306.6" y="925" textLength="20" lengthAdjust="spacingAndGlyphs">GNNC</text><text x="1363.4" y="925" textLength="20" lengthAdjust="spacingAndGlyphs">GNNS</text><text x="1420" y="925" textLength="19" lengthAdjust="spacingAndGlyphs">GNRS</text><text x="1476.8" y="925" textLength="20" lengthAdjust="spacingAndGlyphs">GNSC</text><text x="1533.5" y="925" textLength="20" lengthAdjust="spacingAndGlyphs">GNSH</text><text x="1590.2" y="925" textLength="20" lengthAdjust="spacingAndGlyphs">GNSU</text><text x="1647" y="925" textLength="20" lengthAdjust="spacingAndGlyphs">GNSV</text><text x="1703.7" y="925" textLength="20" lengthAdjust="spacingAndGlyphs">GNTA</text></g>

<!-- watermark -->
<text x="850" y="948" direction="rtl" textLength="208" lengthAdjust="spacingAndGlyphs" style="font-family:'DejaVu Sans',sans-serif;font-size:52px;font-weight:bold;fill:#d0d0d0;fill-opacity:.4;text-anchor:middle">خمسات</text>
</svg>
</body></html>
